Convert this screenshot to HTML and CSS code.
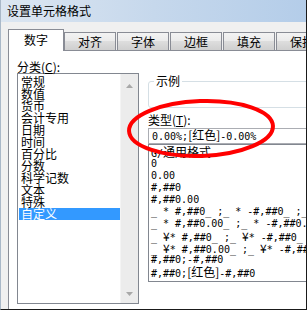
FILE: index.html
```html
<!DOCTYPE html>
<html lang="zh-CN">
<head>
    <meta charset="UTF-8">
    <title>设置单元格格式</title>
    <link rel="stylesheet" href="styles.css">
</head>
<body>

<div class="window">
    <div class="titlebar">设置单元格格式</div>

    <div class="tabs">
        <div class="tab active">数字</div>
        <div class="tab">对齐</div>
        <div class="tab">字体</div>
        <div class="tab">边框</div>
        <div class="tab">填充</div>
        <div class="tab">保护</div>
    </div>

    <div class="panel">
        <div class="col-left">
            <div class="label">分类(<u>C</u>):</div>
            <div class="cat-list">
                <div class="cat-items">
                    <div class="item">常规</div>
                    <div class="item">数值</div>
                    <div class="item">货币</div>
                    <div class="item">会计专用</div>
                    <div class="item">日期</div>
                    <div class="item">时间</div>
                    <div class="item">百分比</div>
                    <div class="item">分数</div>
                    <div class="item">科学记数</div>
                    <div class="item">文本</div>
                    <div class="item">特殊</div>
                    <div class="item selected">自定义</div>
                </div>
                <div class="scrollbar">
                    <svg width="7" height="4" viewBox="0 0 7 4"><polygon points="3.5,0 7,4 0,4" fill="#a8a8a8"/></svg>
                    <svg width="7" height="4" viewBox="0 0 7 4"><polygon points="0,0 7,0 3.5,4" fill="#a8a8a8"/></svg>
                </div>
            </div>
        </div>

        <div class="col-right">
            <div class="sample">
                <span class="sample-title">示例</span>
            </div>
            <div class="label type-label">类型(<u>T</u>):</div>
            <div class="type-input">0.00%;<span class="cjk">[红色]</span>-0.00%</div>
            <div class="fmt-list">
                <div class="row">G/<span class="cjk">通用格式</span></div>
                <div class="row">0</div>
                <div class="row">0.00</div>
                <div class="row">#,##0</div>
                <div class="row">#,##0.00</div>
                <div class="row">_ * #,##0_ ;_ * -#,##0_ ;_ * "-"_ ;_ @_ </div>
                <div class="row">_ * #,##0.00_ ;_ * -#,##0.00_ ;_ * "-"??_ ;_ @_ </div>
                <div class="row">_ <span class="cjk">¥</span>* #,##0_ ;_ <span class="cjk">¥</span>* -#,##0_ ;_ <span class="cjk">¥</span>* "-"_ </div>
                <div class="row">_ <span class="cjk">¥</span>* #,##0.00_ ;_ <span class="cjk">¥</span>* -#,##0.00_ </div>
                <div class="row">#,##0;-#,##0</div>
                <div class="row">#,##0;<span class="cjk">[红色]</span>-#,##0</div>
            </div>
        </div>
    </div>

    <!-- red hand-drawn circle around the type box -->
    <svg class="mark" width="308" height="311" viewBox="0 0 308 311">
        <ellipse cx="200" cy="128.5" rx="72" ry="27.5" fill="none" stroke="#ff0000" stroke-width="4" transform="rotate(-2 200 128.5)"/>
    </svg>
</div>

</body>
</html>
```

FILE: styles.css
```css
body {
    margin: 0;
    background: #fff;
    font-family: "Noto Sans CJK SC", sans-serif;
    font-size: 12px;
    color: #000;
}
.window {
    position: relative;
    width: 305px;
    height: 309px;
    background: #f0f0f0;
    border-left: 1px solid #a9b8c8;
    border-right: 1px solid #1a1a1a;
    border-bottom: 1px solid #1a1a1a;
    overflow: hidden;
}
.titlebar {
    height: 22px;
    line-height: 22px;
    padding-left: 6px;
    background: linear-gradient(to right, #dce6f1, #c6d8ec 50%, #b4cde9);
}
.tabs {
    display: flex;
    align-items: flex-end;
    gap: 1px;
    height: 21px;
    margin-top: 7px;
    padding-left: 7px;
}
.tab {
    flex: none;
    width: 52px;
    height: 18px;
    box-sizing: border-box;
    border: 1px solid #898c95;
    border-bottom: none;
    background: linear-gradient(#f3f3f3, #ebebeb 45%, #dddddd 50%, #cfcfcf);
    text-align: center;
    line-height: 18px;
}
.tab.active {
    position: relative;
    z-index: 1;
    width: 56px;
    height: 22px;
    margin-right: -1px;
    margin-bottom: -1px;
    background: #fff;
    line-height: 20px;
}
.panel {
    width: 320px;
    height: 270px;
    margin-left: 7px;
    padding: 10px 0 0 8px;
    background: #fff;
    border: 1px solid #898c95;
    display: grid;
    grid-template-columns: 122px 1fr;
    column-gap: 9px;
    align-items: start;
}
.label {
    height: 12px;
    line-height: 12px;
}
.cat-list {
    display: flex;
    height: 231px;
    box-sizing: border-box;
    border: 1px solid #828790;
}
.cat-items {
    flex: 1;
    padding: 2px 0 0 1px;
}
.item {
    height: 12px;
    line-height: 12px;
    padding-left: 2px;
    white-space: nowrap;
}
.item.selected {
    background: #3399ff;
    color: #fff;
}
.scrollbar {
    width: 17px;
    background: #ececec;
    border-left: 1px solid #f4f4f4;
    display: flex;
    flex-direction: column;
    justify-content: space-between;
    align-items: center;
    padding: 10px 0 7px;
}
.scrollbar svg {
    display: block;
}
.sample {
    height: 27px;
    box-sizing: border-box;
    margin-top: 20px;
    border: 1px solid #d5dfe5;
    border-radius: 3px;
}
.sample-title {
    display: inline-block;
    vertical-align: top;
    margin: -7px 0 0 5px;
    padding: 0 2px;
    line-height: 12px;
    background: #fff;
}
.type-label {
    margin-top: 6px;
}
.type-input {
    height: 16px;
    box-sizing: border-box;
    margin-top: 2px;
    padding-left: 3px;
    border: 1px solid #abadb3;
    font-family: "DejaVu Sans Mono", monospace;
    font-size: 10px;
    line-height: 14px;
    white-space: pre;
}
.fmt-list {
    height: 138px;
    box-sizing: border-box;
    border: 1px solid #828790;
    padding: 1px 0 0 2px;
    overflow: hidden;
}
.row {
    height: 12px;
    line-height: 12px;
    font-family: "DejaVu Sans Mono", monospace;
    font-size: 10px;
    white-space: pre;
}
.cjk {
    font-family: "Noto Sans CJK SC", sans-serif;
    font-size: 12px;
    line-height: 12px;
}
.mark {
    position: absolute;
    left: 0;
    top: 0;
    pointer-events: none;
}
```
